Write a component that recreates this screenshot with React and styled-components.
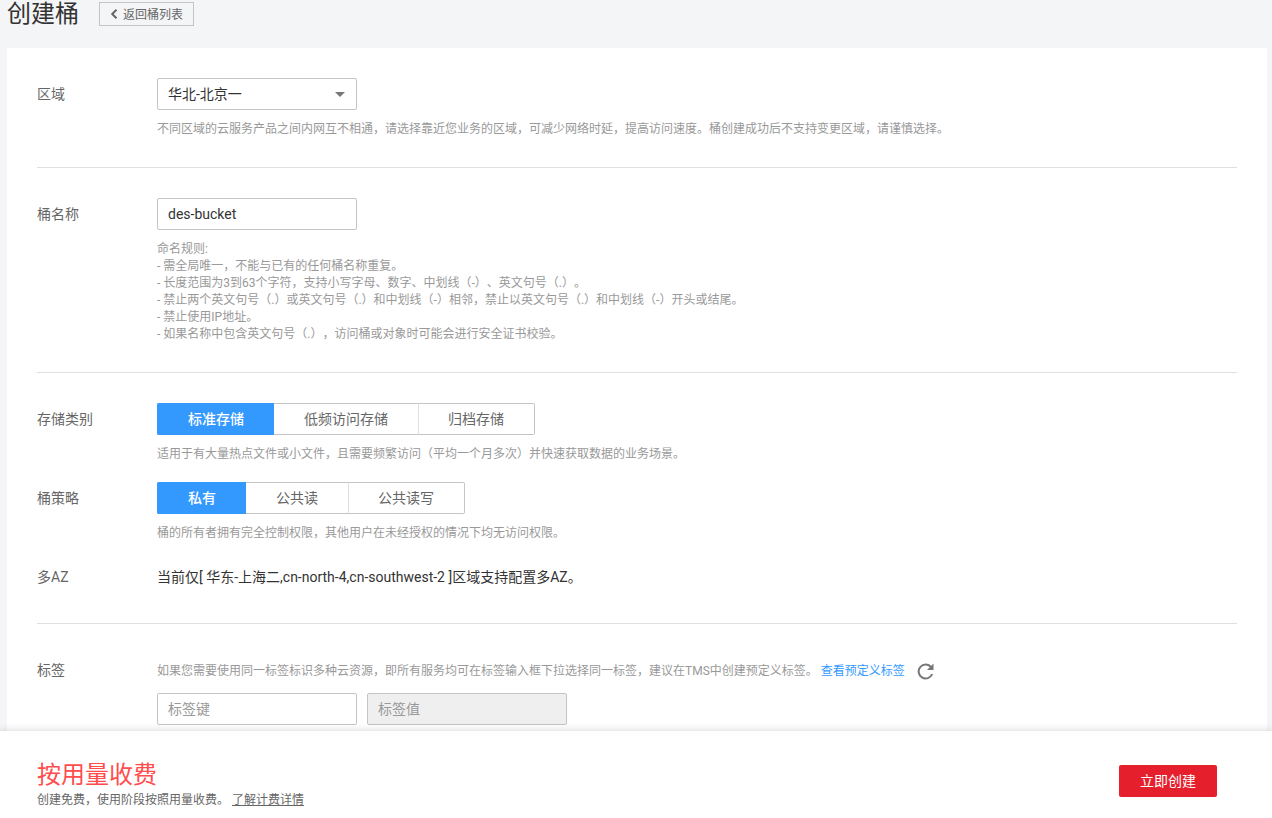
import React, { useState } from "react";
import styled, { createGlobalStyle } from "styled-components";

const GlobalStyle = createGlobalStyle`
  *, *::before, *::after { box-sizing: border-box; }
  body {
    margin: 0;
    background: #f4f5f7;
    color: #333;
    font-family: Roboto, "Noto Sans CJK SC", sans-serif;
    font-size: 14px;
    text-spacing-trim: space-all;
  }
  button, input, select { font: inherit; }
`;

const Page = styled.div`
  display: flex;
  flex-direction: column;
  min-height: 100vh;
`;

const Header = styled.header`
  display: flex;
  align-items: center;
  gap: 20px;
  padding: 0 7px 20px;
`;

const Title = styled.h1`
  margin: 0;
  font-size: 24px;
  font-weight: 400;
  line-height: 28px;
`;

const BackButton = styled.button`
  display: flex;
  align-items: center;
  gap: 5px;
  height: 24px;
  padding: 0 10px 1px;
  border: 1px solid #c4c4c4;
  background: transparent;
  color: #666;
  font-size: 12px;
  cursor: pointer;
`;

const Card = styled.main`
  flex: 1;
  margin: 0 5px 0 7px;
  padding: 0 30px;
  background: #fff;
`;

const Section = styled.section`
  display: flex;
  flex-direction: column;
  gap: 20px;
  padding: 30px 0;
  border-bottom: 1px solid #dfdfdf;

  &:last-child {
    padding-bottom: 6px;
    border-bottom: 0;
  }
`;

const Row = styled.div`
  display: grid;
  grid-template-columns: 120px minmax(0, 1fr);
`;

const Label = styled.label`
  color: #666;
  line-height: 32px;
`;

const Hint = styled.p`
  margin: 11px 0 -1px;
  color: #999;
  font-size: 12px;
  line-height: 17px;
`;

const Value = styled.p`
  margin: 0;
  line-height: 32px;
`;

const Input = styled.input`
  width: 200px;
  height: 32px;
  padding: 0 10px;
  border: 1px solid #c4c4c4;
  border-radius: 2px;
  background: #fff;
  color: #333;

  &::placeholder { color: #999; opacity: 1; }
  &:disabled { background: #efefef; }
`;

const SelectBox = styled.div`
  position: relative;
  width: 200px;
  height: 32px;

  svg {
    position: absolute;
    top: 14px;
    right: 12px;
    pointer-events: none;
  }
`;

const Select = styled.select`
  width: 100%;
  height: 32px;
  padding: 0 30px 0 10px;
  border: 1px solid #c4c4c4;
  border-radius: 2px;
  background: #fff;
  color: #333;
  appearance: none;
`;

const Segments = styled.div`
  display: flex;
`;

const Segment = styled.button`
  height: 32px;
  padding: 0 30px 2px;
  border: 1px solid ${(p) => (p.$active ? "#3399ff" : "#c4c4c4")};
  border-left-width: 0;
  background: ${(p) => (p.$active ? "#3399ff" : "#fff")};
  color: ${(p) => (p.$active ? "#fff" : "#666")};
  font-weight: ${(p) => (p.$active ? 500 : 400)};
  cursor: pointer;

  &:first-child {
    border-left-width: 1px;
    border-right-width: 0;
    border-radius: 2px 0 0 2px;
  }
  &:not(:last-child) { border-right-color: #dfdfdf; }
  &:last-child {
    padding-left: 29px;
    border-radius: 0 2px 2px 0;
  }
`;

const TagHint = styled.div`
  display: flex;
  align-items: center;
  height: 30px;
  margin-bottom: 9px;
  color: #999;
  font-size: 12px;
`;

const TagLink = styled.a`
  margin-left: 3px;
  color: #3399ff;
  text-decoration: none;
`;

const IconButton = styled.button`
  display: flex;
  margin-left: 12px;
  padding: 4px 0 0;
  border: 0;
  background: none;
  cursor: pointer;
`;

const TagInputs = styled.div`
  display: flex;
  gap: 10px;
`;

const Footer = styled.footer`
  position: sticky;
  bottom: 0;
  display: flex;
  align-items: flex-start;
  justify-content: space-between;
  padding: 30px 55px 9px 37px;
  background: #fff;
  box-shadow: 0 0 8px rgba(0, 0, 0, 0.18);
`;

const Price = styled.div`
  color: #ff4c4c;
  font-size: 24px;
  line-height: 28px;
`;

const PriceNote = styled.p`
  margin: 3px 0 0;
  color: #666;
  font-size: 12px;
  line-height: 17px;

  a {
    margin-left: 3px;
    color: inherit;
    text-decoration: underline;
  }
`;

const CreateButton = styled.button`
  height: 32px;
  margin-top: 4px;
  padding: 0 21px 2px;
  border: 0;
  border-radius: 2px;
  background: #e61f2c;
  color: #fff;
  cursor: pointer;
`;

function SegmentGroup({ label, options }) {
  const [selected, setSelected] = useState(options[0]);
  return (
    <Segments role="group" aria-label={label}>
      {options.map((option) => (
        <Segment
          key={option}
          type="button"
          $active={option === selected}
          aria-pressed={option === selected}
          onClick={() => setSelected(option)}
        >
          {option}
        </Segment>
      ))}
    </Segments>
  );
}

export default function App() {
  const [name, setName] = useState("des-bucket");
  return (
    <Page lang="zh-CN">
      <GlobalStyle />
      <Header>
        <Title>创建桶</Title>
        <BackButton type="button">
          <svg width="8" height="10" viewBox="0 0 8 10" fill="none" stroke="#666" strokeWidth="2" aria-hidden="true">
            <path d="M6.5 0.7 2.2 5 6.5 9.3" />
          </svg>
          返回桶列表
        </BackButton>
      </Header>

      <Card>
        <Section>
          <Row>
            <Label htmlFor="region">区域</Label>
            <div>
              <SelectBox>
                <Select id="region" defaultValue="north">
                  <option value="north">华北-北京一</option>
                </Select>
                <svg width="10" height="5" viewBox="0 0 10 5" aria-hidden="true">
                  <path d="M0 0h10L5 5z" fill="#777" />
                </svg>
              </SelectBox>
              <Hint>
                不同区域的云服务产品之间内网互不相通，请选择靠近您业务的区域，可减少网络时延，提高访问速度。桶创建成功后不支持变更区域，请谨慎选择。
              </Hint>
            </div>
          </Row>
        </Section>

        <Section>
          <Row>
            <Label htmlFor="bucket">桶名称</Label>
            <div>
              <Input id="bucket" value={name} onChange={(e) => setName(e.target.value)} />
              <Hint>
                命名规则:<br />
                - 需全局唯一，不能与已有的任何桶名称重复。<br />
                - 长度范围为3到63个字符，支持小写字母、数字、中划线（-）、英文句号（.）。<br />
                - 禁止两个英文句号（.）或英文句号（.）和中划线（-）相邻，禁止以英文句号（.）和中划线（-）开头或结尾。<br />
                - 禁止使用IP地址。<br />
                - 如果名称中包含英文句号（.），访问桶或对象时可能会进行安全证书校验。
              </Hint>
            </div>
          </Row>
        </Section>

        <Section>
          <Row>
            <Label as="span">存储类别</Label>
            <div>
              <SegmentGroup label="存储类别" options={["标准存储", "低频访问存储", "归档存储"]} />
              <Hint>适用于有大量热点文件或小文件，且需要频繁访问（平均一个月多次）并快速获取数据的业务场景。</Hint>
            </div>
          </Row>
          <Row>
            <Label as="span">桶策略</Label>
            <div>
              <SegmentGroup label="桶策略" options={["私有", "公共读", "公共读写"]} />
              <Hint>桶的所有者拥有完全控制权限，其他用户在未经授权的情况下均无访问权限。</Hint>
            </div>
          </Row>
          <Row>
            <Label as="span">多AZ</Label>
            <Value>当前仅[ 华东-上海二,cn-north-4,cn-southwest-2 ]区域支持配置多AZ。</Value>
          </Row>
        </Section>

        <Section>
          <Row>
            <Label htmlFor="tag-key">标签</Label>
            <div>
              <TagHint>
                <span>
                  如果您需要使用同一标签标识多种云资源，即所有服务均可在标签输入框下拉选择同一标签，建议在TMS中创建预定义标签。
                </span>
                <TagLink href="#tags">查看预定义标签</TagLink>
                <IconButton type="button" aria-label="刷新">
                  <svg width="17" height="17" viewBox="0 0 17 17" fill="none" aria-hidden="true">
                    <path d="M14.2 4.2A7 7 0 1 0 15.2 11" stroke="#777" strokeWidth="2" />
                    <path d="M16.5 0.5v6.5H10z" fill="#777" />
                  </svg>
                </IconButton>
              </TagHint>
              <TagInputs>
                <Input id="tag-key" placeholder="标签键" />
                <Input aria-label="标签值" placeholder="标签值" disabled />
              </TagInputs>
            </div>
          </Row>
        </Section>
      </Card>

      <Footer>
        <div>
          <Price>按用量收费</Price>
          <PriceNote>
            创建免费，使用阶段按照用量收费。
            <a href="#pricing">了解计费详情</a>
          </PriceNote>
        </div>
        <CreateButton type="button">立即创建</CreateButton>
      </Footer>
    </Page>
  );
}
